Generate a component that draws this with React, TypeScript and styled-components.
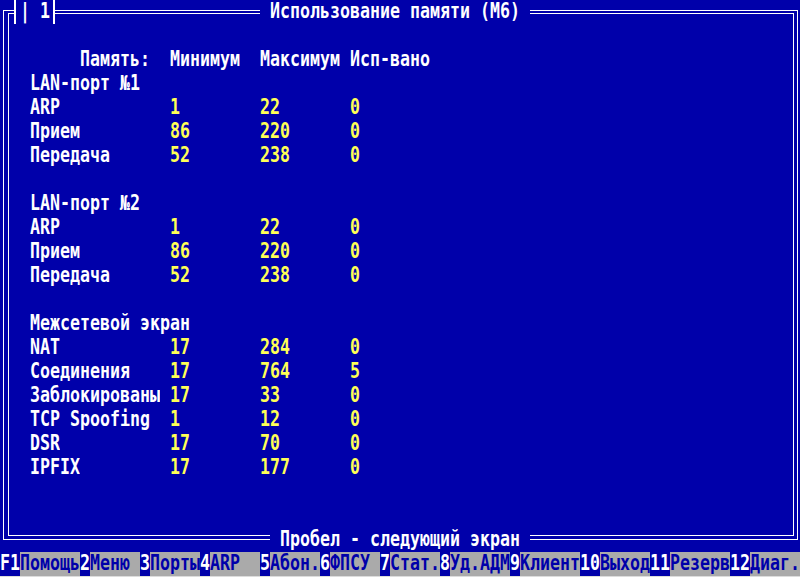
import React from 'react'
import styled, { createGlobalStyle } from 'styled-components'

const BLUE = '#0000aa'
const GRAY = '#aaaaaa'
const YELLOW = '#ffff55'
const WHITE = '#ffffff'

const GlobalStyle = createGlobalStyle`
  html, body {
    margin: 0;
    padding: 0;
    background: ${BLUE};
  }
`

const Screen = styled.div`
  width: 800px;
  height: 577px;
  overflow: hidden;
  display: flex;
  flex-direction: column;
  background: ${BLUE};
  color: ${WHITE};
  font-family: "DejaVu Sans Mono", "Liberation Mono", monospace;
  font-size: 16.61px;
  font-weight: bold;
  line-height: 24px;
`

const Window = styled.div`
  position: relative;
  flex: none;
  height: 552px;
  padding-top: 10px;
  box-sizing: border-box;
`

const OuterFrame = styled.div`
  display: flex;
  height: 530px;
  margin: 0 2px 0 3px;
  box-sizing: border-box;
  border: 1px solid ${WHITE};
`

const InnerFrame = styled.div`
  flex: 1;
  margin: 2px 3px 3px 4px;
  border: 1px solid ${WHITE};
  padding: 34px 0 0 21px;
`

// текст растянут по вертикали, как в текстовом режиме VGA
const Glyphs = styled.span`
  display: inline-block;
  white-space: pre;
  transform: scaleY(1.24);
  transform-origin: 50% 45%;
`

const Legend = styled.div<{ $top: number; $left: number }>`
  position: absolute;
  top: ${p => p.$top}px;
  left: ${p => p.$left}px;
  height: 24px;
  background: ${BLUE};
`

const Tab = styled.div`
  position: absolute;
  top: 0;
  left: 14px;
  height: 24px;
  padding: 0 3px 0 4px;
  background: ${BLUE};
  border-left: 2px solid ${WHITE};
  border-right: 2px solid ${WHITE};
`

const Row = styled.div`
  display: grid;
  grid-template-columns: 140px 90px 90px 1fr;
  height: 24px;
`

const Blank = styled.div`
  height: 24px;
`

const Cell = styled.div<{ $value?: boolean }>`
  color: ${p => (p.$value ? YELLOW : WHITE)};
  white-space: pre;
`

const KeyBar = styled.div`
  display: flex;
  height: 24px;
  background: ${GRAY};
  border-bottom: 1px solid #dcdcdc;
`

const KeyCell = styled.span<{ $chars: number; $num?: boolean }>`
  width: ${p => p.$chars * 10}px;
  flex: none;
  overflow: hidden;
  background: ${p => (p.$num ? BLUE : GRAY)};
  color: ${p => (p.$num ? WHITE : BLUE)};
`

type Item = [string, string, string]

const sections: { title: string; items: Item[] }[] = [
  {
    title: 'LAN-порт №1',
    items: [
      ['ARP', '1', '22'],
      ['Прием', '86', '220'],
      ['Передача', '52', '238'],
    ],
  },
  {
    title: 'LAN-порт №2',
    items: [
      ['ARP', '1', '22'],
      ['Прием', '86', '220'],
      ['Передача', '52', '238'],
    ],
  },
]

const firewall: [string, string, string, string][] = [
  ['NAT', '17', '284', '0'],
  ['Соединения', '17', '764', '5'],
  ['Заблокированы', '17', '33', '0'],
  ['TCP Spoofing', '1', '12', '0'],
  ['DSR', '17', '70', '0'],
  ['IPFIX', '17', '177', '0'],
]

const keys: [string, string][] = [
  ['F1', 'Помощь'],
  ['2', 'Меню '],
  ['3', 'Порты'],
  ['4', 'ARP  '],
  ['5', 'Абон.'],
  ['6', 'ФПСУ '],
  ['7', 'Стат.'],
  ['8', 'Уд.АДМ'],
  ['9', 'Клиент'],
  ['10', 'Выход'],
  ['11', 'Резерв'],
  ['12', 'Диаг.'],
]

const DataRow: React.FC<{ label: string; values: string[] }> = ({ label, values }) => (
  <Row>
    <Cell><Glyphs>{label}</Glyphs></Cell>
    {values.map((v, i) => (
      <Cell key={i} $value><Glyphs>{v}</Glyphs></Cell>
    ))}
  </Row>
)

const App: React.FC = () => {
  return (
    <Screen>
      <GlobalStyle />
      <Window>
        <OuterFrame>
          <InnerFrame>
            <Row>
              <Cell><Glyphs>{'     Память:'}</Glyphs></Cell>
              <Cell><Glyphs>Минимум</Glyphs></Cell>
              <Cell><Glyphs>Максимум</Glyphs></Cell>
              <Cell><Glyphs>Исп-вано</Glyphs></Cell>
            </Row>
            {sections.map((s, si) => (
              <React.Fragment key={si}>
                <Row>
                  <Cell><Glyphs>{s.title}</Glyphs></Cell>
                </Row>
                {s.items.map(([label, min, max]) => (
                  <DataRow key={label} label={label} values={[min, max, '0']} />
                ))}
                <Blank />
              </React.Fragment>
            ))}
            <Row>
              <Cell><Glyphs>Межсетевой экран</Glyphs></Cell>
            </Row>
            {firewall.map(([label, min, max, used]) => (
              <DataRow key={label} label={label} values={[min, max, used]} />
            ))}
          </InnerFrame>
        </OuterFrame>
        <Tab><Glyphs>| 1</Glyphs></Tab>
        <Legend $top={0} $left={260}>
          <Glyphs>{' Использование памяти (М6) '}</Glyphs>
        </Legend>
        <Legend $top={528} $left={270}>
          <Glyphs>{' Пробел - следующий экран '}</Glyphs>
        </Legend>
      </Window>
      <KeyBar>
        {keys.map(([num, label]) => (
          <React.Fragment key={num}>
            <KeyCell $chars={num.length} $num><Glyphs>{num}</Glyphs></KeyCell>
            <KeyCell $chars={label.length}><Glyphs>{label}</Glyphs></KeyCell>
          </React.Fragment>
        ))}
      </KeyBar>
    </Screen>
  )
}

export default App
